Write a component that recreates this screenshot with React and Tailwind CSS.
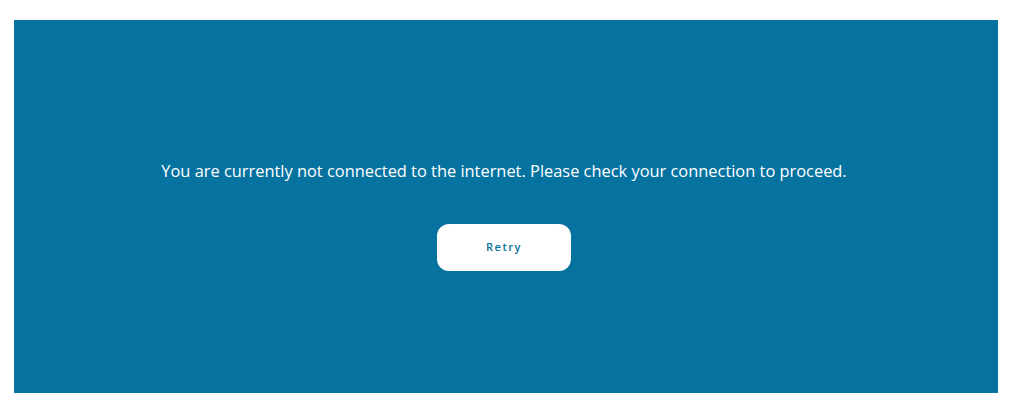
export default function App() {
  return (
    <div className="min-h-[412px] bg-white pt-[20px] pl-[14px] pr-[19px] pb-[19px]" style={{ fontFamily: '"Open Sans", sans-serif' }}>
      <div className="flex h-[373px] flex-col items-center bg-[#0572a0] pt-[139px] pr-[4px]">
        <p className="text-[16.4px] leading-[24px] text-white">
          You are currently not connected to the internet. Please check your connection to proceed.
        </p>
        <button className="mt-[41px] h-[47px] w-[134px] rounded-[12px] bg-white text-[11px] font-semibold tracking-[0.14em] text-[#0572a0]">
          Retry
        </button>
      </div>
    </div>
  );
}
